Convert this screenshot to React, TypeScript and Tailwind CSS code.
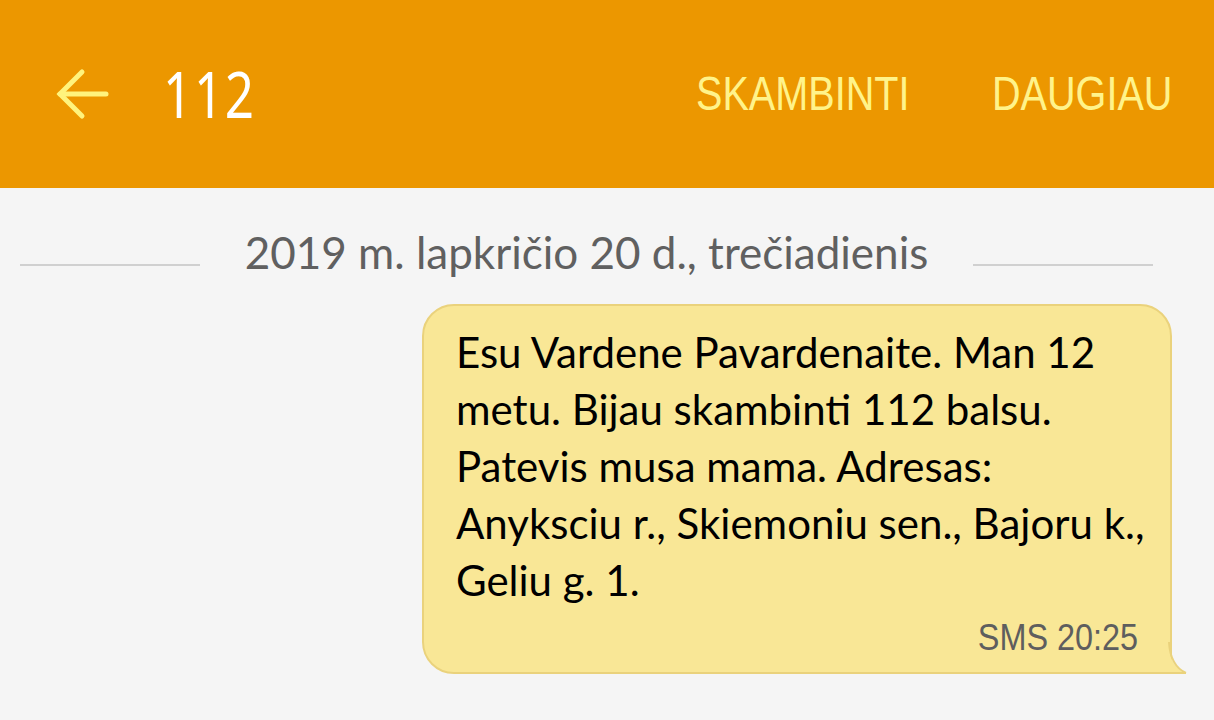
import React from "react";

export default function App() {
  const lines = [
    "Esu Vardene Pavardenaite. Man 12",
    "metu. Bijau skambinti 112 balsu.",
    "Patevis musa mama. Adresas:",
    "Anyksciu r., Skiemoniu sen., Bajoru k.,",
    "Geliu g. 1.",
  ];
  return (
    <div className="w-[1214px] h-[720px] bg-[#f5f5f5] overflow-hidden" style={{ fontFamily: "Lato, 'Noto Sans', sans-serif" }}>
      <header className="h-[188px] bg-[#ec9700] flex items-center">
        <svg className="ml-[55px] w-[54px] h-[54px]" viewBox="0 0 54 54" fill="none" stroke="#fff37d" strokeWidth="5" strokeLinecap="round">
          <path d="M5 27 H51" />
          <path d="M27 5 L5 27 L27 49" strokeLinejoin="miter" />
        </svg>
        <div className="ml-[54px] text-white text-[64px] leading-none tracking-[2px] scale-x-[0.8] origin-left" style={{ fontFamily: "'Noto Sans', sans-serif", fontWeight: 400 }}>112</div>
        <div className="ml-auto flex items-center gap-[100px] mr-[42px] text-[#fff38a] text-[48px] leading-none scale-x-[0.825] origin-right" style={{ fontFamily: "'Liberation Sans', sans-serif" }}>
          <span>SKAMBINTI</span>
          <span>DAUGIAU</span>
        </div>
      </header>
      <div className="flex items-end mt-[42px] ml-[20px] w-[1133px] justify-between">
        <div className="w-[180px] h-[2px] bg-[#d0d0d0] mb-[8px]" />
        <div className="text-[#606060] text-[44px] leading-none">2019 m. lapkričio 20 d., trečiadienis</div>
        <div className="w-[180px] h-[2px] bg-[#d0d0d0] mb-[8px]" />
      </div>
      <div className="flex justify-end mt-[30px] mr-[42px]">
        <div className="relative w-[750px] h-[370px] bg-[#f9e796] border-2 border-[#ead27c] rounded-tl-[32px] rounded-tr-[32px] rounded-bl-[32px] pl-[32px] pt-[18px]">
          <div className="text-black text-[42px] leading-[57px]">
            {lines.map((l, i) => (
              <div key={i} className="whitespace-nowrap">{l}</div>
            ))}
          </div>
          <div className="absolute right-[32px] bottom-[16px] text-[#5e5e5e] text-[36px] leading-none scale-x-[0.9] origin-right" style={{ fontFamily: "'Liberation Sans', sans-serif" }}>SMS 20:25</div>
          <svg className="absolute right-[-18px] bottom-[-2px] w-[20px] h-[32px]" viewBox="0 0 20 32">
            <path d="M0 0 C1 18 8 27 18 32 L0 32 Z" fill="#f9e796" />
            <path d="M1 0 C2 18 9 27 18 31" fill="none" stroke="#ead27c" strokeWidth="2" />
            <path d="M0 31 H18" stroke="#ead27c" strokeWidth="2" />
          </svg>
        </div>
      </div>
    </div>
  );
}
